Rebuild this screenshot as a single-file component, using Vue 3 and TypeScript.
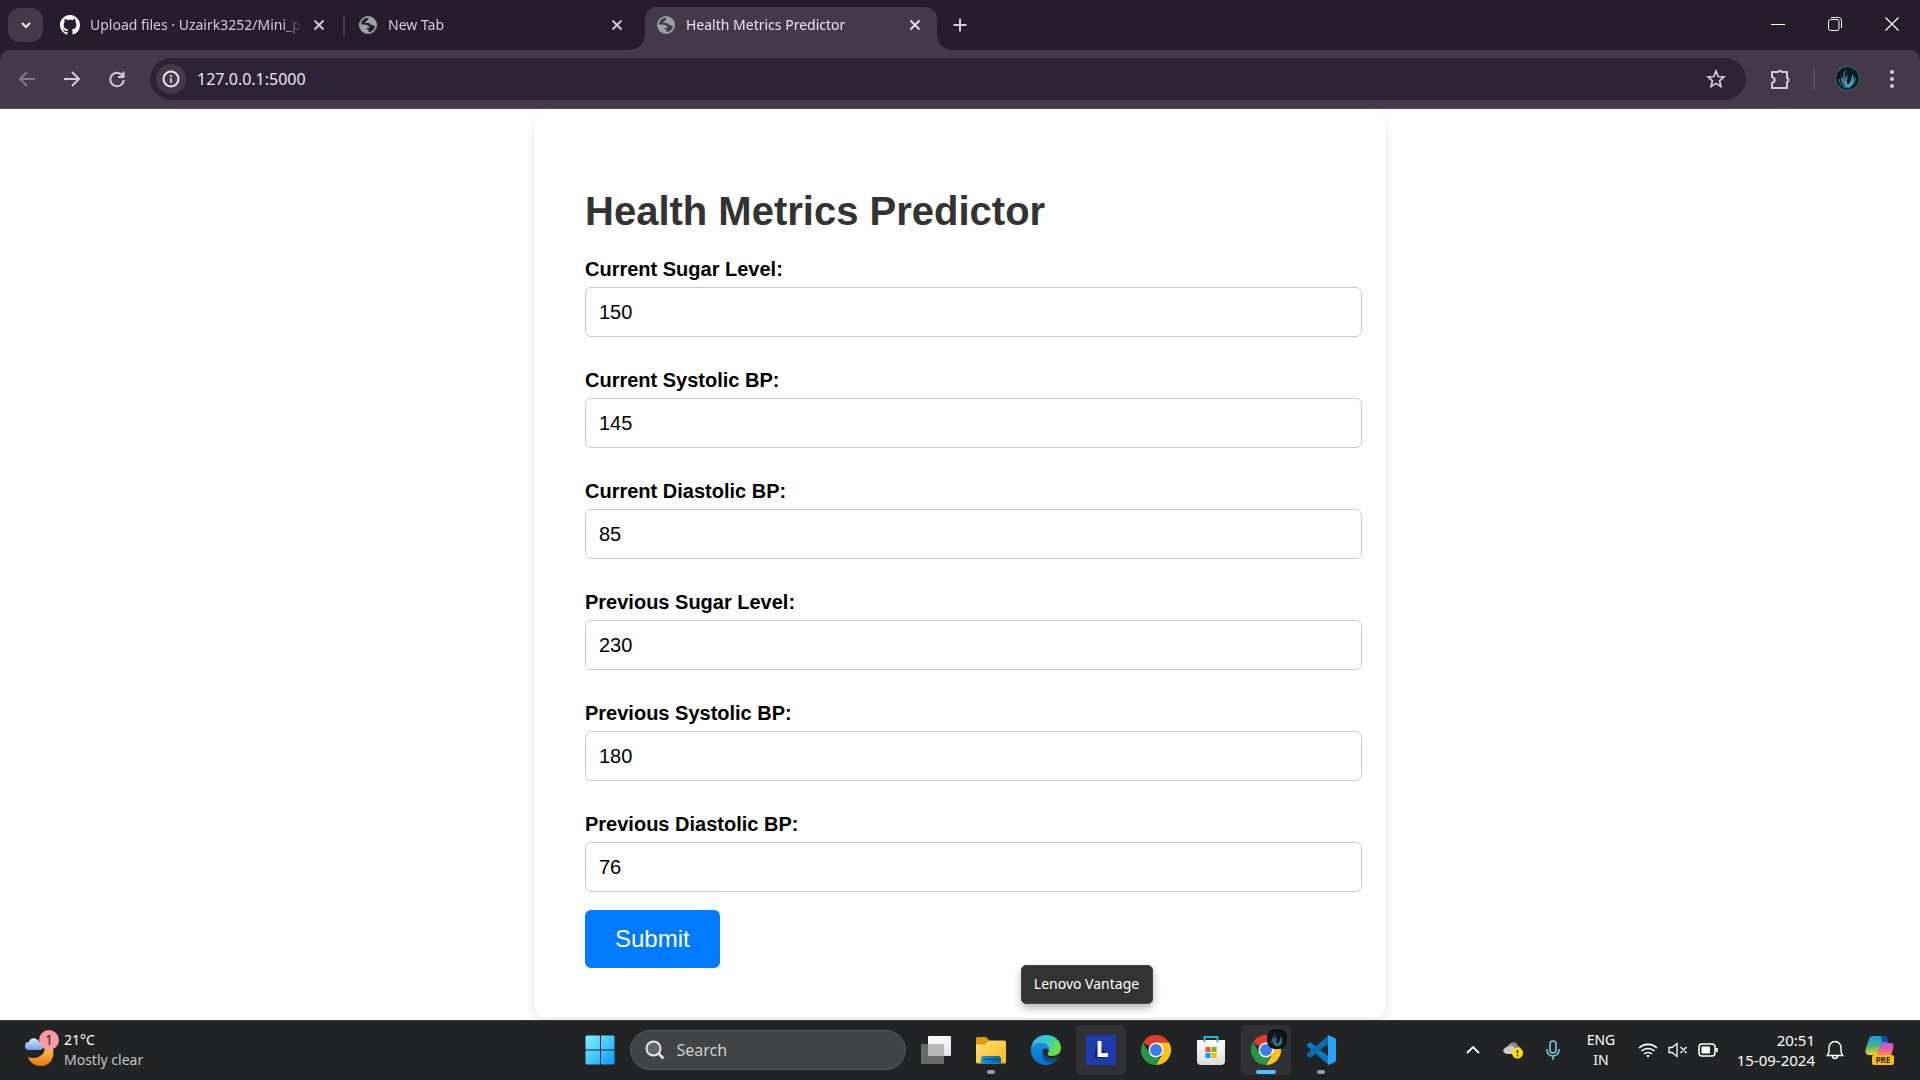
<script setup lang="ts">
import { ref, reactive } from 'vue'

interface Tab {
  title: string
  icon: 'github' | 'globe'
  active: boolean
}

interface Field {
  id: string
  label: string
  value: number
}

const tabs: Tab[] = [
  { title: 'Upload files · Uzairk3252/Mini_p', icon: 'github', active: false },
  { title: 'New Tab', icon: 'globe', active: false },
  { title: 'Health Metrics Predictor', icon: 'globe', active: true },
]

const fields = reactive<Field[]>([
  { id: 'current-sugar', label: 'Current Sugar Level:', value: 150 },
  { id: 'current-systolic', label: 'Current Systolic BP:', value: 145 },
  { id: 'current-diastolic', label: 'Current Diastolic BP:', value: 85 },
  { id: 'previous-sugar', label: 'Previous Sugar Level:', value: 230 },
  { id: 'previous-systolic', label: 'Previous Systolic BP:', value: 180 },
  { id: 'previous-diastolic', label: 'Previous Diastolic BP:', value: 76 },
])

const address = ref('127.0.0.1:5000')
const query = ref('')
</script>

<template>
  <div class="screen">
    <header class="browser">
      <div class="strip">
        <button class="tab-search" aria-label="Search tabs">
          <svg width="12" height="12" viewBox="0 0 12 12"><path d="M2 4l4 4 4-4" fill="none" stroke="currentColor" stroke-width="2" /></svg>
        </button>
        <div v-for="tab in tabs" :key="tab.title" class="tab" :class="{ active: tab.active }">
          <svg v-if="tab.icon === 'github'" class="favicon" viewBox="0 0 16 16" fill="#fff">
            <path d="M8 0C3.58 0 0 3.58 0 8c0 3.54 2.29 6.53 5.47 7.59.4.07.55-.17.55-.38 0-.19-.01-.82-.01-1.49-2.01.37-2.53-.49-2.69-.94-.09-.23-.48-.94-.82-1.13-.28-.15-.68-.52-.01-.53.63-.01 1.08.58 1.23.82.72 1.21 1.87.87 2.33.66.07-.52.28-.87.51-1.07-1.78-.2-3.64-.89-3.64-3.95 0-.87.31-1.59.82-2.15-.08-.2-.36-1.02.08-2.12 0 0 .67-.21 2.2.82.64-.18 1.32-.27 2-.27s1.36.09 2 .27c1.53-1.04 2.2-.82 2.2-.82.44 1.1.16 1.92.08 2.12.51.56.82 1.27.82 2.15 0 3.07-1.87 3.75-3.65 3.95.29.25.54.73.54 1.48 0 1.07-.01 1.93-.01 2.2 0 .21.15.46.55.38A8.01 8.01 0 0 0 16 8c0-4.42-3.58-8-8-8z" />
          </svg>
          <svg v-else class="favicon" viewBox="0 0 20 20">
            <circle cx="10" cy="10" r="9" fill="#9aa0a6" />
            <path class="land" d="M3 9.5c.2-3.2 2-5.600 5-6.500l2.600.2c-.2 1.200-.8 1.900-2 2.300-.4.700.1 1.200-.9 1.700-.8.300-1.600 0-1.700.8h4.500c1.200 0 1.600 1 1.700 1.800h1.900c1 0 1 1.700 2.900 1.500-.2 1.800-1.500 3.900-3.300 4.900-1 .5-2 .8-3.200.8v-2.200c-1 0-2-.6-2-1.700h2.200c.9 0 .9-1.200.2-1.900-1.500-1.600-4-1.700-7.900-1.700z" />
          </svg>
          <span class="tab-title">{{ tab.title }}</span>
          <button class="close" aria-label="Close tab">
            <svg width="12" height="12" viewBox="0 0 12 12"><path d="M1.500 1.500l9 9M10.500 1.500l-9 9" stroke="currentColor" stroke-width="1.800" /></svg>
          </button>
        </div>
        <button class="new-tab" aria-label="New tab">
          <svg width="14" height="14" viewBox="0 0 14 14"><path d="M7 .5v13M.5 7h13" stroke="currentColor" stroke-width="2" /></svg>
        </button>
        <div class="window-controls">
          <button aria-label="Minimize"><svg width="14" height="14" viewBox="0 0 14 14"><path d="M0 7.500h14" stroke="#fff" /></svg></button>
          <button aria-label="Restore">
            <svg width="14" height="14" viewBox="0 0 14 14" fill="none" stroke="#fff"><rect x=".5" y="2.500" width="10.500" height="11" rx="2" /><path d="M3 .5h7.500a3 3 0 0 1 3 3v7.500" /></svg>
          </button>
          <button aria-label="Close"><svg width="14" height="14" viewBox="0 0 14 14"><path d="M.5.5l13 13M13.500.5l-13 13" stroke="#fff" stroke-width="1.200" /></svg></button>
        </div>
      </div>

      <div class="toolbar">
        <button class="nav dim" aria-label="Back">
          <svg width="18" height="18" viewBox="0 0 18 18"><path d="M17 9H2M9 2L2 9l7 7" fill="none" stroke="currentColor" stroke-width="2" /></svg>
        </button>
        <button class="nav" aria-label="Forward">
          <svg width="18" height="18" viewBox="0 0 18 18"><path d="M1 9h15M9 2l7 7-7 7" fill="none" stroke="currentColor" stroke-width="2" /></svg>
        </button>
        <button class="nav" aria-label="Reload">
          <svg width="18" height="18" viewBox="0 0 18 18"><path d="M15 6.500A6.700 6.700 0 1 0 15.700 10M15.500 1.500V7H10" fill="none" stroke="currentColor" stroke-width="2" /></svg>
        </button>
        <div class="omnibox">
          <button class="info" aria-label="Site information">
            <svg width="18" height="18" viewBox="0 0 18 18"><circle cx="9" cy="9" r="7.500" fill="none" stroke="#ebe4ef" stroke-width="2" /><path d="M9 8v5M9 5v2" stroke="#ebe4ef" stroke-width="1.600" /></svg>
          </button>
          <input v-model="address" class="address" type="text" aria-label="Address" />
          <button class="star" aria-label="Bookmark this tab">
            <svg width="20" height="20" viewBox="0 0 20 20"><path d="M10 2.200l2.200 5.300 5.700.5-4.300 3.800 1.300 5.600-4.900-3-4.900 3 1.300-5.600L2.100 8l5.700-.5z" fill="none" stroke="currentColor" stroke-width="1.700" /></svg>
          </button>
        </div>
        <button class="ext" aria-label="Extensions">
          <svg width="22" height="22" viewBox="0 0 22 22"><path d="M2 4h6a2.200 2.200 0 0 1 4 0h5v6a2.200 2.200 0 0 1 0 4.200V20H2v-5.300c3.600-.7 3.600-4.700 0-5.400z" fill="none" stroke="currentColor" stroke-width="2" stroke-linejoin="round" /></svg>
        </button>
        <span class="divider"></span>
        <button class="profile" aria-label="Profile">
          <svg width="25" height="25" viewBox="0 0 25 25">
            <circle cx="12.500" cy="12.500" r="12" fill="#08191f" stroke="#427174" />
            <path d="M6 7c2 4-2 7 2 11 1 2 3 3 4 3-3-4-2-6-1-9-2-2-1-5 0-8-3 2-3 6-2 9-2-1-2-4-3-6z" fill="#5a7199" />
            <path d="M12 8c2 3-2 7 1 11 2-3 4-4 4-11 3 5 2 9-1 12-1 1-3 2-5 1-3-4 1-8 1-13z" fill="#4fa3bd" />
            <path d="M4 13c0 5 4 8 8 9M20 11c1 5-3 9-7 11" stroke="#1fa39f" fill="none" />
          </svg>
        </button>
        <button class="menu" aria-label="Menu">
          <svg width="4" height="20" viewBox="0 0 4 20" fill="currentColor"><circle cx="2" cy="3" r="2" /><circle cx="2" cy="10" r="2" /><circle cx="2" cy="17" r="2" /></svg>
        </button>
      </div>
    </header>

    <main class="page">
      <section class="card">
        <h1>Health Metrics Predictor</h1>
        <form @submit.prevent>
          <div v-for="field in fields" :key="field.id" class="field">
            <label :for="field.id">{{ field.label }}</label>
            <input :id="field.id" v-model="field.value" type="number" />
          </div>
          <button class="submit" type="submit">Submit</button>
        </form>
      </section>
    </main>

    <footer class="taskbar">
      <button class="weather">
        <svg width="30" height="36" viewBox="0 0 30 36">
          <defs>
            <linearGradient id="moon" x1="0" y1="0" x2="0" y2="1"><stop offset="0" stop-color="#ffc44e" /><stop offset="1" stop-color="#e87513" /></linearGradient>
            <linearGradient id="cloud" x1="0" y1="0" x2="0" y2="1"><stop offset="0" stop-color="#dcebff" /><stop offset="1" stop-color="#6c9fec" /></linearGradient>
          </defs>
          <path d="M3 25c10 3 17-2 17-10l8 2c2 9-3 17-12 17-6 0-11-3-13-9z" fill="url(#moon)" />
          <path d="M4 18a4 4 0 0 1 0-8C5 5 12 5 14 10c5-1 6 8 1 8z" fill="url(#cloud)" />
        </svg>
        <span class="badge">1</span>
        <span class="forecast"><span class="temp">21°C</span><span>Mostly clear</span></span>
      </button>

      <nav class="apps">
        <button class="app" aria-label="Start">
          <svg width="30" height="30" viewBox="0 0 30 30">
            <defs><linearGradient id="win" x1="0" y1="0" x2="1" y2="1"><stop offset="0" stop-color="#84f2ff" /><stop offset="1" stop-color="#079bff" /></linearGradient></defs>
            <path d="M1.500.5H15v14H.5v-13zM16 .5h12.500l1 1v13H16zM.5 15.500H15v14H1.500l-1-1zM16 15.500h13.500v13l-1 1H16z" fill="url(#win)" />
          </svg>
        </button>
        <label class="search">
          <svg width="20" height="20" viewBox="0 0 20 20"><circle cx="8.500" cy="8.500" r="7" fill="#666" stroke="#e6e6e6" stroke-width="2" /><path d="M13.500 13.500l5 5" stroke="#e6e6e6" stroke-width="2.500" /></svg>
          <input v-model="query" type="text" placeholder="Search" aria-label="Search" />
        </label>
        <button class="app" aria-label="Task view">
          <svg width="30" height="30" viewBox="0 0 30 30">
            <defs><linearGradient id="tv" x1="0" y1="0" x2="0" y2="1"><stop offset="0" stop-color="#fff" /><stop offset="1" stop-color="#e0e0e0" /></linearGradient></defs>
            <rect x="7" y="1" width="23" height="20" rx="1" fill="url(#tv)" />
            <rect x="0" y="9" width="23" height="20" rx="1" fill="#6a6a6a" />
            <path d="M7 9h16v12H7z" fill="#b6b6b6" />
          </svg>
        </button>
        <button class="app" aria-label="File Explorer">
          <svg width="30" height="30" viewBox="0 0 30 30">
            <defs>
              <linearGradient id="folder" x1="0" y1="0" x2="1" y2="1"><stop offset="0" stop-color="#ffe17a" /><stop offset="1" stop-color="#fcb616" /></linearGradient>
              <linearGradient id="tray" x1="0" y1="0" x2="1" y2="0"><stop offset="0" stop-color="#1a92dc" /><stop offset="1" stop-color="#0563ae" /></linearGradient>
            </defs>
            <path d="M0 3.500A1.500 1.500 0 0 1 1.500 2H10l3 3v5H0z" fill="#dc9b05" />
            <path d="M0 9.500h9l4-4h15.500A1.500 1.500 0 0 1 30 7v20a1.500 1.500 0 0 1-1.500 1.500h-27A1.500 1.500 0 0 1 0 27z" fill="url(#folder)" />
            <path d="M5 28.500V24a3 3 0 0 1 3-3h14a3 3 0 0 1 3 3v4.500z" fill="url(#tray)" /><path d="M8 24.500h14" stroke="#06437c" />
          </svg>
          <span class="mark"></span>
        </button>
        <button class="app" aria-label="Edge">
          <svg width="30" height="30" viewBox="0 0 30 30">
            <defs>
              <linearGradient id="edge-a" x1="0" y1="0" x2="1" y2=".5"><stop offset="0" stop-color="#31b5ef" /><stop offset=".5" stop-color="#36c9d5" /><stop offset="1" stop-color="#69e13f" /></linearGradient>
              <linearGradient id="edge-b" x1="0" y1="0" x2="0" y2="1"><stop offset="0" stop-color="#1590dd" /><stop offset="1" stop-color="#0870cf" /></linearGradient>
            </defs>
            <path d="M0 14C1 5 7 0 15 0c9 0 15 6 15 13 0 5-4 8-9 8-4 0-5-1-4-3 3-5-1-9-6-9-6 0-10 3-11 8z" fill="url(#edge-a)" />
            <path d="M0 16c0-6 5-9 11-8 6 0 8 5 7 8-1-3-6-4-7 1-1 7 5 12 13 10-3 2-6 3-9 3C7 30 0 24 0 16z" fill="url(#edge-b)" />
            <path d="M12 14c-3 7 1 13 10 13 2 0 5-3 6-5-5 3-16 2-16-8z" fill="#114e96" />
          </svg>
        </button>
        <button class="app lit" aria-label="Lenovo Vantage">
          <svg width="30" height="30" viewBox="0 0 30 30"><path d="M0 0h30v30H0z" fill="#1e3cae" /><path d="M12 6L8 23h11l3-1z" fill="#0c254e" /><path d="M11.500 6h4v12H22v4H11.500z" fill="#fff" /></svg>
          <span class="tooltip" role="tooltip">Lenovo Vantage</span>
        </button>
        <button class="app" aria-label="Chrome">
          <svg width="30" height="30" viewBox="0 0 30 30">
            <path d="M15 15L2 7.500A15 15 0 0 1 28 7.500H15z" fill="#e33b2e" />
            <path d="M15 7.500h13A15 15 0 0 1 15 30l6.500-11.200z" fill="#fcc31e" />
            <path d="M2 7.500l6.500 11.300L15 22.500h4.300L15 30A15 15 0 0 1 2 7.500z" fill="#249847" />
            <circle cx="15" cy="15" r="7.500" fill="#fff" /><circle cx="15" cy="15" r="6" fill="#3b7ded" />
          </svg>
        </button>
        <button class="app" aria-label="Microsoft Store">
          <svg width="30" height="30" viewBox="0 0 30 30">
            <defs><linearGradient id="bag" x1="0" y1="0" x2="0" y2="1"><stop offset="0" stop-color="#fff" /><stop offset="1" stop-color="#dcdcdc" /></linearGradient></defs>
            <path d="M1 5h28v21a4 4 0 0 1-4 4H5a4 4 0 0 1-4-4z" fill="url(#bag)" />
            <path d="M8.500 7V2h13v5" fill="none" stroke="#25b1e8" stroke-width="2" />
            <path d="M9.500 12h5v5h-5z" fill="#f05126" /><path d="M15.500 12h5v5h-5z" fill="#7fb900" /><path d="M9.500 18h5v5h-5z" fill="#04a4ee" /><path d="M15.500 18h5v5h-5z" fill="#fdb801" />
          </svg>
        </button>
        <button class="app lit" aria-label="Chrome, running">
          <svg width="30" height="30" viewBox="0 0 30 30">
            <path d="M15 15L2 7.500A15 15 0 0 1 28 7.500H15z" fill="#e33b2e" />
            <path d="M15 7.500h13A15 15 0 0 1 15 30l6.500-11.200z" fill="#fcc31e" />
            <path d="M2 7.500l6.500 11.300L15 22.500h4.300L15 30A15 15 0 0 1 2 7.500z" fill="#249847" />
            <circle cx="15" cy="15" r="7.500" fill="#fff" /><circle cx="15" cy="15" r="6" fill="#3b7ded" />
          </svg>
          <svg class="user" width="20" height="20" viewBox="0 0 25 25">
            <rect x="0" y="0" width="25" height="25" rx="10" fill="#0a1418" />
            <path d="M6 7c2 4-2 7 2 11 1 2 3 3 4 3-3-4-2-6-1-9-2-2-1-5 0-8-3 2-3 6-2 9-2-1-2-4-3-6z" fill="#46586f" />
            <path d="M12 8c2 3-2 7 1 11 2-3 4-4 4-11 3 5 2 9-1 12-1 1-3 2-5 1-3-4 1-8 1-13z" fill="#3d7184" />
            <path d="M5 15c1 4 4 6 8 6 4 0 6-3 7-6" stroke="#226c70" fill="none" />
          </svg>
          <span class="mark on"></span>
        </button>
        <button class="app" aria-label="Visual Studio Code">
          <svg width="30" height="30" viewBox="0 0 30 30">
            <path d="M1.300 9.300L3 7.800q1-.6 2 0L23 22v8L1 11.200q-.8-1 .3-1.900z" fill="#087ac0" />
            <path d="M1.300 20.700L3 22.200q1 .6 2 0L23 8V0L1 18.800q-.8 1 .3 1.900z" fill="#0b6dad" />
            <path d="M22 0l6.500 2.800q1.500.7 1.500 2.200v20q0 1.500-1.500 2.200L22 30z" fill="#27a3ef" />
          </svg>
          <span class="mark"></span>
        </button>
      </nav>

      <div class="tray">
        <button class="tray-item" aria-label="Show hidden icons"><svg width="14" height="8" viewBox="0 0 14 8"><path d="M1 7l6-6 6 6" fill="none" stroke="#fff" stroke-width="1.800" /></svg></button>
        <button class="tray-item" aria-label="OneDrive">
          <svg width="20" height="18" viewBox="0 0 20 18">
            <path d="M5 6c1-5 8-7 10-1 4 1 4 6 1 8H8z" fill="#8b8b8b" /><path d="M4 13c-5-1-5-6 0-7 3-4 7 0 9 2v5z" fill="#ccc" />
            <circle cx="14.500" cy="12" r="5.500" fill="#fde301" /><path d="M14.500 9v3.500M14.500 14v1.500" stroke="#222" stroke-width="1.500" />
          </svg>
        </button>
        <button class="tray-item" aria-label="Microphone">
          <svg width="14" height="20" viewBox="0 0 14 20" fill="none" stroke="#7fd0ea" stroke-width="1.500"><rect x="4" y="1" width="6" height="12" rx="3" /><path d="M1 9v1a6 6 0 0 0 12 0V9M7 16v4" /></svg>
        </button>
        <button class="lang"><span>ENG</span><span>IN</span></button>
        <button class="status" aria-label="Network, volume, battery">
          <svg width="20" height="16" viewBox="0 0 20 16" fill="none" stroke="#fff" stroke-width="1.600"><path d="M1 6a13 13 0 0 1 18 0M3.500 9a9.500 9.500 0 0 1 13 0M6.200 12a5.500 5.500 0 0 1 7.600 0" /><circle cx="10" cy="14" r="1.200" fill="#fff" stroke="none" /></svg>
          <svg width="20" height="16" viewBox="0 0 20 16" fill="none" stroke="#fff" stroke-width="1.300"><path d="M1 5.500h3l5-4v13l-5-4H1zM12.500 5l6 6M18.500 5l-6 6" /></svg>
          <svg width="20" height="14" viewBox="0 0 20 14" fill="none" stroke="#fff" stroke-width="1.500"><rect x="1" y="1" width="16" height="12" rx="3" /><path d="M18.800 5v4" stroke-width="2" /><rect x="3.500" y="3.500" width="8.500" height="7" rx="1" fill="#fff" stroke="none" /></svg>
        </button>
        <button class="clock"><span>20:51</span><span>15-09-2024</span></button>
        <button class="bell" aria-label="Notifications">
          <svg width="18" height="20" viewBox="0 0 18 20" fill="none" stroke="#fff" stroke-width="1.400"><path d="M9 1.500a6 6 0 0 0-6 6V12l-1.800 3.500h15.600L15 12V7.500a6 6 0 0 0-6-6zM6.500 16a2.500 2.500 0 0 0 5 0" /></svg>
        </button>
        <button class="copilot" aria-label="Copilot preview">
          <svg width="30" height="30" viewBox="0 0 30 30">
            <defs>
              <linearGradient id="cp-a" x1="0" y1="0" x2="0" y2="1"><stop offset="0" stop-color="#159fe8" /><stop offset=".5" stop-color="#46ae87" /><stop offset="1" stop-color="#f2d51b" /></linearGradient>
              <linearGradient id="cp-b" x1="0" y1="0" x2="0" y2="1"><stop offset="0" stop-color="#b257e4" /><stop offset=".6" stop-color="#f7618f" /><stop offset="1" stop-color="#ff9354" /></linearGradient>
            </defs>
            <path d="M8 1h12c2 0 2 2 3 6l-6 3-4 10H4c-4 0-4-4-3-7L4 4c.8-2 2-3 4-3z" fill="url(#cp-a)" />
            <path d="M16 1h4c2 0 2 2 3 6h-6z" fill="#1747b6" />
            <path d="M17 8h9c3 0 3 3 2 6l-2 7H12l3-11c.4-1 1-2 2-2z" fill="url(#cp-b)" />
          </svg>
          <span class="pre">PRE</span>
        </button>
      </div>
    </footer>
  </div>
</template>

<style>
body {
  margin: 0;
  background: #fff;
}
</style>

<style scoped>
* {
  box-sizing: border-box;
}

button {
  display: flex;
  align-items: center;
  justify-content: center;
  margin: 0;
  padding: 0;
  border: 0;
  background: none;
  color: inherit;
  font: inherit;
}

svg {
  display: block;
  flex: none;
}

.screen {
  display: flex;
  flex-direction: column;
  min-height: 100vh;
  font-family: 'Noto Sans', 'Open Sans', sans-serif;
  font-size: 14px;
}

.browser {
  background: #251c2e;
  color: #d8c6e2;
}

.strip {
  display: flex;
  gap: 6px;
  height: 50px;
  padding-left: 8px;
}

.tab-search {
  width: 35px;
  height: 34px;
  margin-top: 8px;
  border-radius: 12px;
  background: #43394b;
  color: #efe6f4;
}

.tab {
  position: relative;
  display: flex;
  align-items: center;
  width: 292px;
  height: 43px;
  margin-top: 7px;
  padding: 0 13px 7px 11px;
}

.tab:nth-of-type(1)::after {
  content: '';
  position: absolute;
  right: -4px;
  top: 9px;
  width: 2px;
  height: 20px;
  background: #43394b;
}

.tab.active {
  border-radius: 12px 12px 0 0;
  background: #43394b;
  color: #ece3f1;
}

.tab.active::before,
.tab.active::after {
  content: '';
  position: absolute;
  bottom: 0;
  width: 14px;
  height: 14px;
}

.tab.active::before {
  right: 100%;
  background: radial-gradient(circle at 0 0, transparent 13px, #43394b 14px);
}

.tab.active::after {
  left: 100%;
  background: radial-gradient(circle at 100% 0, transparent 13px, #43394b 14px);
}

.favicon {
  width: 20px;
  height: 20px;
}

.land {
  fill: #251c2e;
}

.active .land {
  fill: #43394b;
}

.tab-title {
  flex: 1;
  overflow: hidden;
  margin: 0 8px 0 10px;
  line-height: 20px;
  white-space: nowrap;
  mask-image: linear-gradient(to right, #000 calc(100% - 20px), transparent);
}

.close {
  width: 18px;
  height: 18px;
}

.new-tab {
  width: 34px;
  height: 50px;
}

.window-controls {
  display: flex;
  margin-left: auto;
}

.window-controls button {
  width: 57px;
  height: 48px;
}

.toolbar {
  display: flex;
  align-items: center;
  height: 59px;
  padding: 0 26px 1px 9px;
  border-bottom: 1px solid #554c5c;
  border-radius: 10px 10px 0 0;
  background: #43394b;
}

.nav {
  width: 35px;
  height: 35px;
  margin-right: 10px;
}

.nav.dim {
  color: #84778d;
}

.omnibox {
  display: flex;
  flex: 1;
  align-items: center;
  height: 42px;
  margin-left: 6px;
  padding: 0 20px 0 6px;
  border-radius: 21px;
  background: #2c2235;
}

.info {
  width: 30px;
  height: 30px;
  border-radius: 50%;
  background: #43394b;
}

.address {
  flex: 1;
  min-width: 0;
  margin-left: 11px;
  padding: 0;
  border: 0;
  outline: 0;
  background: none;
  color: #ece6f0;
  font: inherit;
  font-size: 16px;
}

.ext {
  width: 22px;
  margin-left: 24px;
}

.divider {
  width: 2px;
  height: 20px;
  margin: 0 20px 0 21px;
  background: #5b4f65;
}

.menu {
  margin-left: 30px;
}

.page {
  flex: 1;
  overflow: hidden;
  padding: 3px 20px 2px;
  background: #fff;
  font-family: 'Liberation Sans', Arial, sans-serif;
}

.card {
  max-width: 850px;
  margin: 0 auto;
  padding: 76px 50px 50px;
  border-radius: 12px;
  background: #fff;
  box-shadow: 0 5px 12px rgba(0, 0, 0, 0.1);
}

h1 {
  margin: 0 0 24px;
  color: #333;
  font-size: 40px;
  line-height: 46px;
}

.field {
  margin-bottom: 32px;
}

.field:nth-last-child(2) {
  margin-bottom: 18px;
}

.field label {
  display: block;
  margin-bottom: 6px;
  color: #000;
  font-size: 20px;
  font-weight: 700;
  line-height: 23px;
}

.field input {
  display: block;
  width: calc(100% + 27px);
  height: 50px;
  padding: 0 13px;
  border: 1px solid #ccc;
  border-radius: 6px;
  outline: 0;
  background: #fff;
  color: #000;
  font: inherit;
  font-size: 20px;
}

.submit {
  height: 58px;
  padding: 0 30px;
  border-radius: 6px;
  background: #007bff;
  color: #fff;
  font-size: 24px;
}

.taskbar {
  display: grid;
  grid-template-columns: 1fr auto 1fr;
  align-items: center;
  height: 60px;
  background: #212324;
  box-shadow: inset 0 1px #3b3f40;
  color: #fff;
}

.weather {
  position: relative;
  justify-self: start;
  gap: 9px;
  margin-left: 25px;
}

.badge {
  position: absolute;
  top: 0;
  left: 14px;
  width: 20px;
  height: 20px;
  border-radius: 50%;
  background: #fe99a2;
  color: #222;
  line-height: 20px;
}

.forecast,
.lang,
.clock {
  display: flex;
  flex-direction: column;
  line-height: 20px;
}

.forecast {
  align-items: flex-start;
  color: #c6c6c6;
}

.temp {
  color: #fff;
}

.apps {
  display: flex;
  align-items: center;
  gap: 5px;
}

.app {
  position: relative;
  width: 50px;
  height: 50px;
  border-radius: 5px;
}

.app.lit {
  background: #303132;
}

.user {
  position: absolute;
  top: 4px;
  right: 4px;
}

.mark {
  position: absolute;
  bottom: 1px;
  left: 21px;
  width: 8px;
  height: 4px;
  border-radius: 2px;
  background: #9b9b9b;
}

.mark.on {
  left: 15px;
  width: 20px;
  background: #4cc2ff;
}

.tooltip {
  position: absolute;
  bottom: 71px;
  left: -55px;
  width: 132px;
  height: 39px;
  border: 1px solid #444;
  border-radius: 5px;
  background: #333;
  box-shadow: 0 4px 8px rgba(0, 0, 0, 0.3);
  color: #fff;
  line-height: 36px;
  text-align: center;
  white-space: nowrap;
}

.search {
  display: flex;
  align-items: center;
  gap: 12px;
  width: 276px;
  height: 40px;
  padding: 0 14px;
  border: 1px solid #565758;
  border-radius: 20px;
  background: #424344;
}

.search input {
  flex: 1;
  min-width: 0;
  padding: 0;
  border: 0;
  outline: 0;
  background: none;
  color: #fff;
  font: inherit;
  font-size: 16px;
}

.search input::placeholder {
  color: #d0d0d0;
  opacity: 1;
}

.tray {
  display: flex;
  align-items: center;
  justify-self: end;
  gap: 10px;
  margin-right: 15px;
}

.tray-item {
  width: 30px;
  height: 40px;
}

.lang {
  width: 46px;
}

.status {
  gap: 10px;
  padding: 0 4px;
}

.clock {
  align-items: flex-end;
  width: 83px;
  font-size: 15px;
}

.bell {
  width: 20px;
}

.copilot {
  position: relative;
  width: 50px;
  height: 50px;
}

.pre {
  position: absolute;
  bottom: 10px;
  left: 17px;
  width: 22px;
  height: 10px;
  border-radius: 2px;
  background: #ffbd07;
  color: #222;
  font-size: 8px;
  font-weight: 700;
  line-height: 10px;
}
</style>
